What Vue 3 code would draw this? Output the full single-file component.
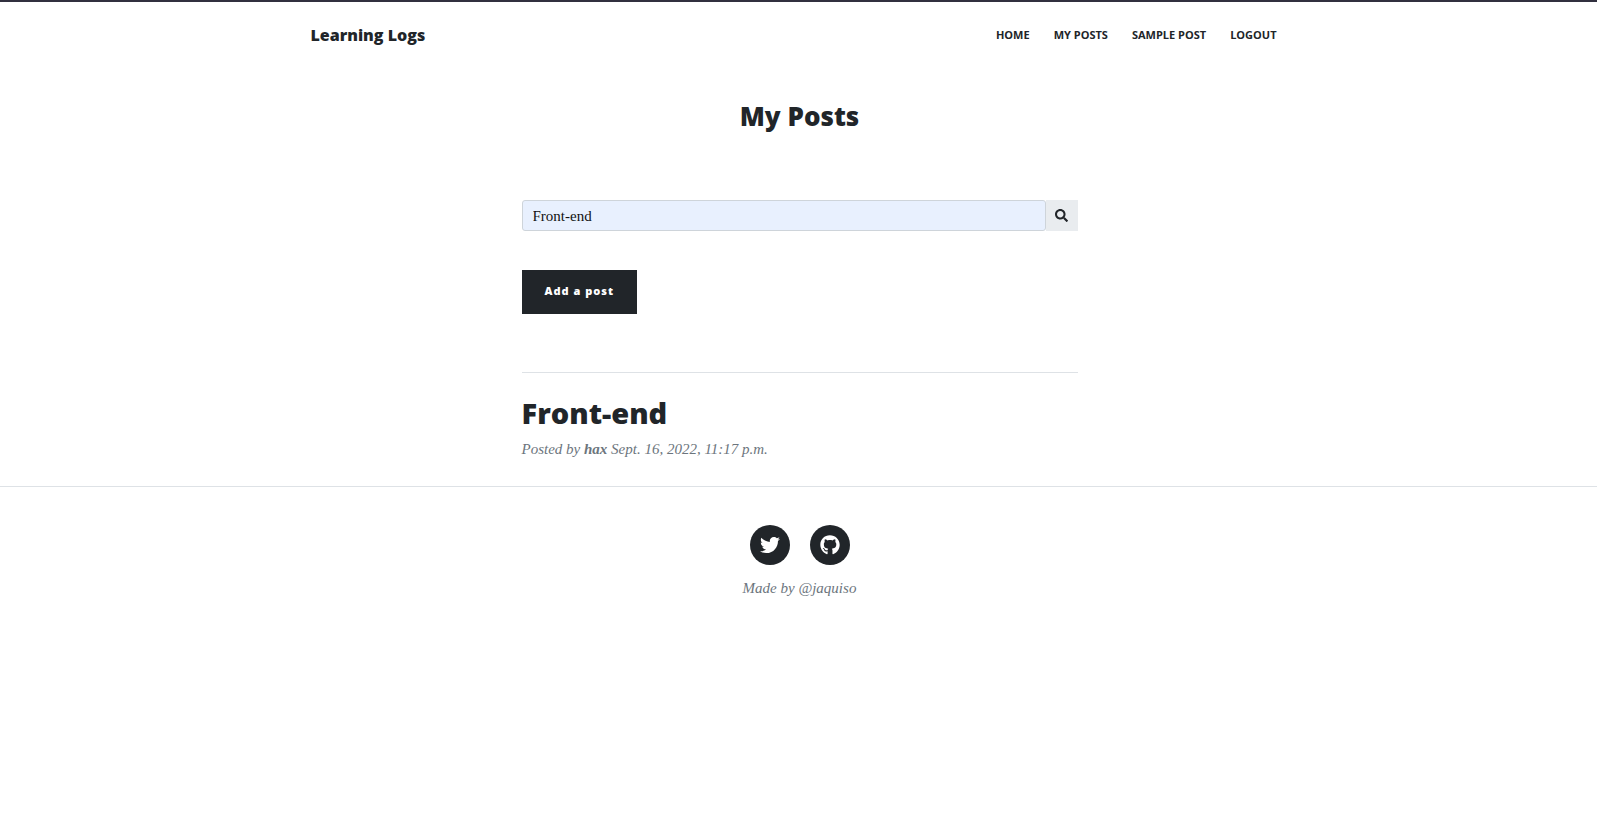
<script setup>
import { ref } from 'vue'

const links = ['Home', 'My Posts', 'Sample Post', 'Logout']
const query = ref('Front-end')
</script>

<template>
  <div class="page">
    <nav class="navbar">
      <a class="brand" href="#">Learning Logs</a>
      <ul class="menu">
        <li v-for="link in links" :key="link"><a href="#">{{ link }}</a></li>
      </ul>
    </nav>

    <main class="column">
      <h1>My Posts</h1>
      <form class="search" @submit.prevent>
        <input v-model="query" type="search" aria-label="Search posts" />
        <button type="submit" aria-label="Search">
          <svg viewBox="0 0 512 512" aria-hidden="true">
            <path d="M505 442.700L405.300 343c-4.500-4.500-10.600-7-17-7H372c27.600-35.300 44-79.700 44-128C416 93.100 322.900 0 208 0S0 93.100 0 208s93.100 208 208 208c48.300 0 92.700-16.400 128-44v16.300c0 6.400 2.500 12.500 7 17l99.700 99.700c9.400 9.400 24.600 9.400 33.900 0l28.300-28.300c9.400-9.400 9.400-24.600.1-34zM208 336c-70.700 0-128-57.200-128-128 0-70.700 57.200-128 128-128 70.700 0 128 57.200 128 128 0 70.700-57.200 128-128 128z" />
          </svg>
        </button>
      </form>
      <button class="add" type="button">Add a post</button>
      <article class="post">
        <h2><a href="#">Front-end</a></h2>
        <p class="meta">Posted by <strong>hax</strong> Sept. 16, 2022, 11:17 p.m.</p>
      </article>
    </main>

    <footer class="footer">
      <div class="social">
        <a href="#" aria-label="Twitter">
          <svg viewBox="0 0 512 512" aria-hidden="true">
            <path d="M459.370 151.716c.325 4.548.325 9.097.325 13.645 0 138.720-105.583 298.558-298.558 298.558-59.452 0-114.680-17.219-161.137-47.106 8.447.974 16.568 1.299 25.340 1.299 49.055 0 94.213-16.568 130.274-44.832-46.132-.975-84.792-31.188-98.112-72.772 6.498.974 12.995 1.624 19.818 1.624 9.421 0 18.843-1.300 27.614-3.573-48.081-9.747-84.143-51.980-84.143-102.985v-1.299c13.969 7.797 30.214 12.670 47.431 13.319-28.264-18.843-46.781-51.005-46.781-87.391 0-19.492 5.197-37.360 14.294-52.954 51.655 63.675 129.300 105.258 216.365 109.807-1.624-7.797-2.599-15.918-2.599-24.040 0-57.828 46.782-104.934 104.934-104.934 30.213 0 57.502 12.670 76.670 33.137 23.715-4.548 46.456-13.320 66.599-25.340-7.798 24.366-24.366 44.833-46.132 57.827 21.117-2.273 41.584-8.122 60.426-16.243-14.292 20.791-32.161 39.308-52.628 54.253z" />
          </svg>
        </a>
        <a href="#" aria-label="GitHub">
          <svg viewBox="0 0 496 512" aria-hidden="true">
            <path d="M165.900 397.400c0 2-2.300 3.600-5.200 3.600-3.300.3-5.600-1.300-5.600-3.600 0-2 2.300-3.600 5.200-3.600 3-.3 5.600 1.300 5.600 3.600zm-31.100-4.500c-.7 2 1.300 4.300 4.300 4.900 2.600 1 5.600 0 6.200-2s-1.300-4.300-4.300-5.200c-2.600-.7-5.500.3-6.200 2.300zm44.200-1.700c-2.900.7-4.900 2.600-4.600 4.900.3 2 2.900 3.300 5.900 2.600 2.900-.7 4.900-2.600 4.600-4.600-.3-1.900-3-3.200-5.900-2.900zM244.800 8C106.100 8 0 113.300 0 252c0 110.900 69.800 205.800 169.500 239.200 12.800 2.300 17.300-5.600 17.300-12.100 0-6.200-.3-40.400-.3-61.400 0 0-70 15-84.700-29.800 0 0-11.400-29.100-27.800-36.600 0 0-22.900-15.700 1.600-15.400 0 0 24.900 2 38.600 25.800 21.900 38.600 58.600 27.500 72.900 20.900 2.300-16 8.800-27.100 16-33.700-55.900-6.200-112.300-14.300-112.300-110.500 0-27.500 7.600-41.300 23.600-58.900-2.600-6.500-11.100-33.300 2.600-67.900 20.900-6.500 69 27 69 27 20-5.600 41.500-8.500 62.800-8.500s42.800 2.900 62.800 8.500c0 0 48.100-33.600 69-27 13.700 34.700 5.200 61.400 2.600 67.900 16 17.700 25.800 31.500 25.800 58.900 0 96.500-58.900 104.200-114.800 110.500 9.200 7.900 17 22.900 17 46.400 0 33.700-.3 75.400-.3 83.600 0 6.500 4.600 14.400 17.300 12.100C428.200 457.800 496 362.900 496 252 496 113.300 383.500 8 244.800 8z" />
          </svg>
        </a>
      </div>
      <p>Made by @jaquiso</p>
    </footer>
  </div>
</template>

<style>
body {
  background: #fff;
}
</style>

<style scoped>
.page {
  border-top: 2px solid #31303f;
  color: #212529;
  font-family: "Liberation Serif", serif;
  font-size: 15px;
  line-height: 20px;
}

.page * {
  box-sizing: border-box;
}

a {
  color: inherit;
  text-decoration: none;
}

.brand,
.menu,
h1,
h2,
.add {
  font-family: "Open Sans", sans-serif;
  font-weight: 800;
}

.navbar {
  display: flex;
  align-items: center;
  justify-content: space-between;
  max-width: 980px;
  height: 65px;
  margin: 0 auto;
  padding-left: 2px;
}

.brand {
  font-size: 16px;
  line-height: 24px;
}

.menu {
  display: flex;
  gap: 24px;
  margin: 0;
  padding: 0 12px;
  list-style: none;
  font-size: 11px;
  font-weight: 700;
  text-transform: uppercase;
}

.column {
  max-width: 558px;
  margin: 0 auto;
  padding-left: 2px;
}

h1 {
  margin: 31px 0 66px;
  font-size: 26px;
  line-height: 36px;
  text-align: center;
}

.search {
  display: flex;
  height: 31px;
}

.search input {
  flex: 1;
  min-width: 0;
  padding: 0 10px;
  border: 1px solid #ced4da;
  border-radius: 3px;
  background: #e8f0fe;
  color: #111;
  font: inherit;
  appearance: none;
}

.search input::-webkit-search-cancel-button {
  display: none;
}

.search button {
  display: flex;
  align-items: center;
  justify-content: center;
  width: 32px;
  padding: 0;
  border: 0;
  background: #e9ecef;
}

.search svg {
  width: 13px;
  height: 13px;
  fill: #212529;
}

.add {
  display: block;
  height: 44px;
  margin: 39px 0 58px;
  padding: 0 23px 3px;
  border: 0;
  background: #212529;
  color: #fff;
  font-size: 11px;
  letter-spacing: 1px;
}

.post {
  padding: 21px 0 27px;
  border-top: 1px solid #dee2e6;
}

h2 {
  margin: 0 0 7px;
  font-size: 29px;
  line-height: 38px;
}

p {
  margin: 0;
  color: #6c757d;
  font-size: 15px;
  font-style: italic;
}

.footer {
  padding: 38px 0 32px 2px;
  border-top: 1px solid #dee2e6;
  text-align: center;
}

.social {
  display: flex;
  justify-content: center;
  gap: 20px;
  margin-bottom: 13px;
}

.social a {
  display: flex;
  align-items: center;
  justify-content: center;
  width: 40px;
  height: 40px;
  border-radius: 50%;
  background: #212529;
}

.social svg {
  width: 20px;
  height: 20px;
  fill: #fff;
}
</style>
